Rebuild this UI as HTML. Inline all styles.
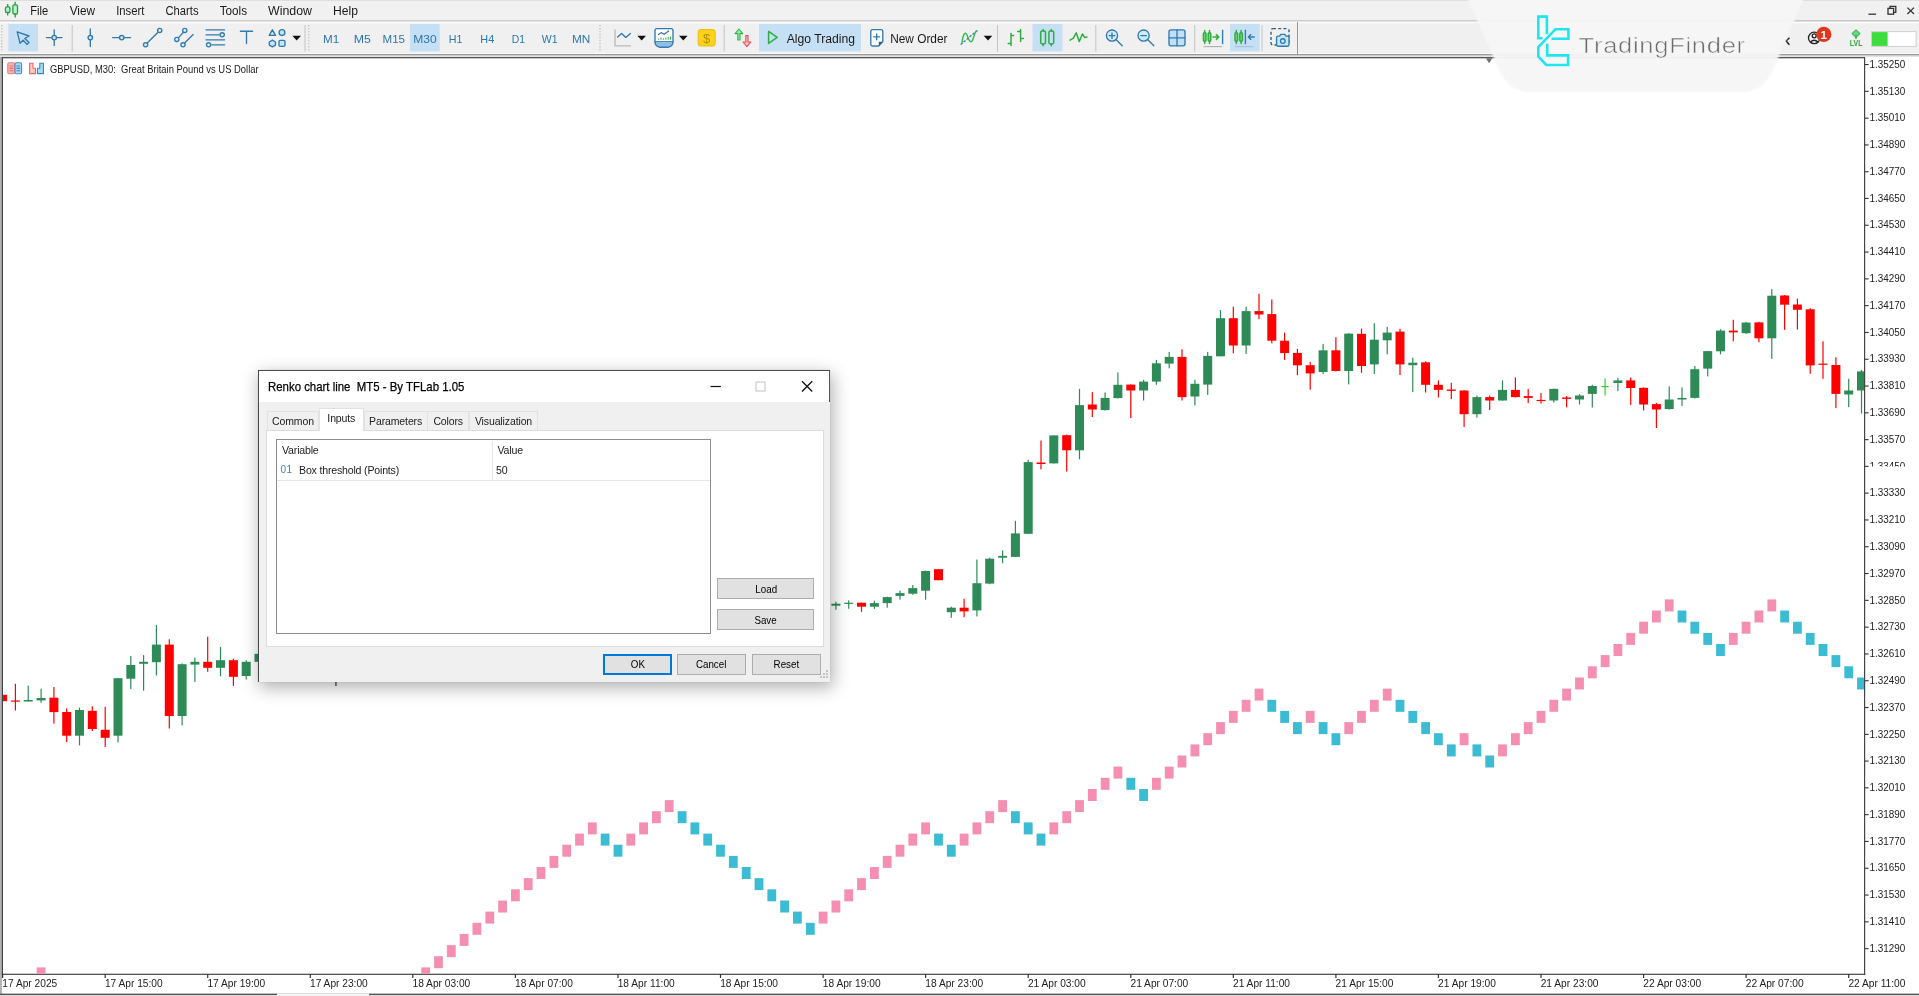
<!DOCTYPE html><html><head><meta charset="utf-8"><title>GBPUSD, M30 - Renko chart line MT5</title>
<style>
html,body{margin:0;padding:0;background:#fff;}
body{width:1919px;height:996px;overflow:hidden;position:relative;font-family:"Liberation Sans",sans-serif;}
svg{position:absolute;left:0;top:0;will-change:transform;}
svg text{font-family:"Liberation Sans",sans-serif;}
#dlg{will-change:transform;position:absolute;left:258px;top:370px;width:572px;height:312px;box-sizing:border-box;background:#f0f0f0;border:0 solid #4a4a4a;border-width:1.2px 0 0 1.2px;box-shadow:2px 5px 16px 1px rgba(0,0,0,.30),0 0 2px rgba(0,0,0,.10);}
#dlg .title{position:absolute;left:0;top:0;right:0;height:31px;background:#fff;border-right:1.2px solid #555;}
#dlg .title span{position:absolute;left:9px;top:9px;font-size:12.6px;color:#000;-webkit-text-stroke:.25px #000;white-space:pre;transform-origin:0 50%;transform:scaleX(.906);display:inline-block}
#dlg .tab{position:absolute;top:40px;height:19px;box-sizing:border-box;background:#f0f0f0;border:1px solid #e2e2e2;border-bottom:none;font-size:10.5px;color:#222;text-align:center;line-height:18.400px;white-space:nowrap;letter-spacing:-.12px}
#dlg .tab.sel{top:37.400px;height:22.600px;background:#fff;border-color:#e2e2e2;line-height:19.400px;z-index:2}
#dlg .page{position:absolute;left:7px;top:59px;width:558px;height:217px;background:#fff;border:1px solid #dcdcdc;box-sizing:border-box}
#dlg .list{position:absolute;left:17px;top:68px;width:435px;height:195px;background:#fff;border:1px solid #8c8c8c;box-sizing:border-box}
#dlg .btn{position:absolute;box-sizing:border-box;background:#e1e1e1;border:1px solid #adadad;font-size:11px;color:#000;text-align:center;}
#dlg .btn span{display:inline-block;transform:scaleX(.89)}
#dlg .lbl{position:absolute;font-size:10.6px;color:#222;white-space:pre;letter-spacing:-.19px}

</style></head><body>
<svg width="1919" height="996" viewBox="0 0 1919 996">
<rect x="0" y="0" width="1919" height="57" fill="#f0f0f0"/>
<rect x="0" y="0" width="1919" height="20" fill="#f1f1f1"/>
<rect x="0" y="20" width="1919" height="1.4" fill="#cdcdcd"/>
<rect x="0" y="0" width="1919" height="0.8" fill="#dadada"/>
<rect x="0" y="22" width="1919" height="1.3" fill="#fcfcfc"/>
<rect x="0" y="53" width="1919" height="1" fill="#fafafa"/>
<rect x="0" y="54" width="1919" height="1.6" fill="#9b9b9b"/>
<rect x="0" y="55.6" width="1919" height="1.5" fill="#e3e3e3"/>
<rect x="0" y="57" width="2" height="939" fill="#b4b4b4"/>
<rect x="1864" y="57" width="55" height="939" fill="#fff"/>
<rect x="1.8" y="57.1" width="1863.2" height="1.2" fill="#444"/>
<rect x="1.8" y="57.1" width="1.2" height="918" fill="#444"/>
<rect x="1864" y="57.1" width="1.2" height="918" fill="#444"/>
<rect x="1.8" y="973.7" width="1863.4" height="1.2" fill="#444"/>
<rect x="0" y="993.6" width="1919" height="1.6" fill="#555"/>
<rect x="0" y="995.2" width="1919" height="1" fill="#ddd"/>
<rect x="277" y="993.4" width="92" height="2.6" fill="#f4f4f4"/>
<text x="30.3" y="14.7" font-size="12.6" fill="#1a1a1a" textLength="18" lengthAdjust="spacingAndGlyphs">File</text>
<text x="69.7" y="14.7" font-size="12.6" fill="#1a1a1a" textLength="25.3" lengthAdjust="spacingAndGlyphs">View</text>
<text x="116.2" y="14.7" font-size="12.6" fill="#1a1a1a" textLength="28.3" lengthAdjust="spacingAndGlyphs">Insert</text>
<text x="165.5" y="14.7" font-size="12.6" fill="#1a1a1a" textLength="33" lengthAdjust="spacingAndGlyphs">Charts</text>
<text x="219.7" y="14.7" font-size="12.6" fill="#1a1a1a" textLength="27.3" lengthAdjust="spacingAndGlyphs">Tools</text>
<text x="268" y="14.7" font-size="12.6" fill="#1a1a1a" textLength="44" lengthAdjust="spacingAndGlyphs">Window</text>
<text x="333" y="14.7" font-size="12.6" fill="#1a1a1a" textLength="25" lengthAdjust="spacingAndGlyphs">Help</text>
<g stroke="#22a040" stroke-width="1.3" fill="#b8f2c8"><path d="M7.7 4v11.6M15.2 1.8v15.6" fill="none"/><rect x="5.5" y="6.9" width="4.4" height="5.6" rx="1.2"/><rect x="12.9" y="4.8" width="4.6" height="9.2" rx="1.2"/></g>
<g stroke="#333" stroke-width="1.3" fill="none"><path d="M1868.5 14.2h7.6"/><rect x="1888" y="8.4" width="5.6" height="5.8"/><path d="M1890 8.4v-2h5.8v6h-2"/><path d="M1907.4 7.6l6.6 6.4M1914 7.6l-6.6 6.4"/></g>
<rect x="1.3" y="25" width="1" height="1.4" fill="#b5b5b5"/><rect x="1.3" y="28" width="1" height="1.4" fill="#b5b5b5"/><rect x="1.3" y="31" width="1" height="1.4" fill="#b5b5b5"/><rect x="1.3" y="34" width="1" height="1.4" fill="#b5b5b5"/><rect x="1.3" y="37" width="1" height="1.4" fill="#b5b5b5"/><rect x="1.3" y="40" width="1" height="1.4" fill="#b5b5b5"/><rect x="1.3" y="43" width="1" height="1.4" fill="#b5b5b5"/><rect x="1.3" y="46" width="1" height="1.4" fill="#b5b5b5"/><rect x="1.3" y="49" width="1" height="1.4" fill="#b5b5b5"/>
<rect x="308.3" y="25" width="1" height="1.4" fill="#b5b5b5"/><rect x="308.3" y="28" width="1" height="1.4" fill="#b5b5b5"/><rect x="308.3" y="31" width="1" height="1.4" fill="#b5b5b5"/><rect x="308.3" y="34" width="1" height="1.4" fill="#b5b5b5"/><rect x="308.3" y="37" width="1" height="1.4" fill="#b5b5b5"/><rect x="308.3" y="40" width="1" height="1.4" fill="#b5b5b5"/><rect x="308.3" y="43" width="1" height="1.4" fill="#b5b5b5"/><rect x="308.3" y="46" width="1" height="1.4" fill="#b5b5b5"/><rect x="308.3" y="49" width="1" height="1.4" fill="#b5b5b5"/>
<rect x="599.5" y="25" width="1" height="1.4" fill="#b5b5b5"/><rect x="599.5" y="28" width="1" height="1.4" fill="#b5b5b5"/><rect x="599.5" y="31" width="1" height="1.4" fill="#b5b5b5"/><rect x="599.5" y="34" width="1" height="1.4" fill="#b5b5b5"/><rect x="599.5" y="37" width="1" height="1.4" fill="#b5b5b5"/><rect x="599.5" y="40" width="1" height="1.4" fill="#b5b5b5"/><rect x="599.5" y="43" width="1" height="1.4" fill="#b5b5b5"/><rect x="599.5" y="46" width="1" height="1.4" fill="#b5b5b5"/><rect x="599.5" y="49" width="1" height="1.4" fill="#b5b5b5"/>
<rect x="304.5" y="25" width="1" height="26.5" fill="#c4c4c4"/>
<rect x="8.3" y="24" width="29.7" height="27.3" fill="#c5dff5"/>
<rect x="410" y="24" width="29.7" height="27.3" fill="#c5dff5"/>
<rect x="759" y="24" width="102" height="27.3" fill="#c5dff5"/>
<rect x="1032.5" y="24" width="30" height="27.3" fill="#c5dff5"/>
<rect x="1230" y="24" width="29.7" height="27.3" fill="#c5dff5"/>
<path d="M17.2 31.8L29 36L24.8 38.5L29 42.6L27 44.4L23.2 40.3L20 43.2Z" stroke="#327aab" stroke-width="1.35" fill="none" stroke-linecap="round" stroke-linejoin="round"/>
<g stroke="#327aab" stroke-width="1.35" fill="none" stroke-linecap="round" stroke-linejoin="round"><path d="M46.4 37.6h5M57 37.6h5M54.2 29.8v5M54.2 40.4v5"/><circle cx="54.2" cy="37.6" r="2.3" fill="#bfe6fb"/></g>
<rect x="71.7" y="25" width="1" height="26.5" fill="#c4c4c4"/>
<g stroke="#327aab" stroke-width="1.35" fill="none" stroke-linecap="round" stroke-linejoin="round"><path d="M90.3 29v6M90.3 40.2v6.4"/><circle cx="90.3" cy="37.6" r="2.2" fill="#bfe6fb"/></g>
<g stroke="#327aab" stroke-width="1.35" fill="none" stroke-linecap="round" stroke-linejoin="round"><path d="M112.6 37.6h6.4M124.4 37.6h6.2"/><circle cx="121.7" cy="37.6" r="2.2" fill="#bfe6fb"/></g>
<g stroke="#327aab" stroke-width="1.35" fill="none" stroke-linecap="round" stroke-linejoin="round"><path d="M147.2 43l10.8-10.8"/><circle cx="145.6" cy="44.8" r="2.1" fill="#dff2fd"/><circle cx="159.7" cy="30.5" r="2.1" fill="#dff2fd"/></g>
<g stroke="#327aab" stroke-width="1.35" fill="none" stroke-linecap="round" stroke-linejoin="round"><path d="M178.6 37.6l4.8-5.4M184.6 43l8.6-8.4"/><circle cx="176.8" cy="39.4" r="2.1" fill="#dff2fd"/><circle cx="184.8" cy="30.4" r="2.1" fill="#dff2fd"/><circle cx="183" cy="44.8" r="2.1" fill="#dff2fd"/></g>
<g stroke="#327aab" stroke-width="1.35" fill="none" stroke-linecap="round" stroke-linejoin="round"><path d="M206 29.8h18.6M206 34.8h13.2M206 39.8h18.6M211.8 44.8h12.8"/><circle cx="222.2" cy="34.8" r="2.1" fill="#dff2fd"/><circle cx="208.6" cy="44.8" r="2.1" fill="#dff2fd"/></g>
<g stroke="#327aab" stroke-width="1.35" fill="none" stroke-linecap="round" stroke-linejoin="round"><path d="M240.4 31.2h12.2M246.5 31.2v12.4"/></g>
<g stroke="#327aab" stroke-width="1.35" fill="none" stroke-linecap="round" stroke-linejoin="round"><path d="M272.4 29.8l3.2 5.6h-6.4z" fill="#bfe6fb"/><circle cx="282" cy="32.6" r="2.9" fill="#bfe6fb"/><path d="M272.4 40.2l3.1 1.8v3.1l-3.1 1.7l-3.1-1.7v-3.1z" fill="#bfe6fb"/><rect x="279" y="40.4" width="6" height="6" rx="1.3" fill="#bfe6fb"/></g>
<path d="M292.4 35.8h8.6l-4.3 4.6z" fill="#111"/>
<text x="323" y="43" font-size="11.8" fill="#2b76ae" textLength="16.2" lengthAdjust="spacingAndGlyphs">M1</text>
<text x="353.7" y="43" font-size="11.8" fill="#2b76ae" textLength="17.1" lengthAdjust="spacingAndGlyphs">M5</text>
<text x="382.5" y="43" font-size="11.8" fill="#2b76ae" textLength="22.5" lengthAdjust="spacingAndGlyphs">M15</text>
<text x="413.3" y="43" font-size="11.8" fill="#2b76ae" textLength="23.4" lengthAdjust="spacingAndGlyphs">M30</text>
<text x="448.8" y="43" font-size="11.8" fill="#2b76ae" textLength="13.7" lengthAdjust="spacingAndGlyphs">H1</text>
<text x="480.3" y="43" font-size="11.8" fill="#2b76ae" textLength="13.9" lengthAdjust="spacingAndGlyphs">H4</text>
<text x="511.7" y="43" font-size="11.8" fill="#2b76ae" textLength="13.3" lengthAdjust="spacingAndGlyphs">D1</text>
<text x="541.7" y="43" font-size="11.8" fill="#2b76ae" textLength="15.8" lengthAdjust="spacingAndGlyphs">W1</text>
<text x="572" y="43" font-size="11.8" fill="#2b76ae" textLength="18.3" lengthAdjust="spacingAndGlyphs">MN</text>
<path d="M615 29.4v16.4h16" stroke="#b9b9b9" stroke-width="1.3" fill="none"/>
<path d="M617.6 37l4-3.6l4.2 4l4.6-4" stroke="#327aab" stroke-width="1.35" fill="none" stroke-linecap="round" stroke-linejoin="round"/>
<path d="M637.4000000000001 35.8h8.6l-4.3 4.6z" fill="#111"/>
<g stroke="#327aab" stroke-width="1.35" fill="none" stroke-linecap="round" stroke-linejoin="round"><path d="M655 30.6q0-2 2-2h14q2 0 2 2v11.1h-18z" fill="#fff"/><path d="M655 41.7q0 4.4 4.6 5.5h8.8q4.6-1.1 4.6-5.5" fill="#8fbfe6"/></g>
<path d="M658 34.8l3.2-2.2l3 1.6l4.8-3.4" stroke="#3a6ea5" stroke-width="1.2" fill="none"/><path d="M658.6 39.8v-1.4M661 39.8v-2.2M663.4 39.8v-1.6M665.8 39.8v-2.4M668.2 39.8v-3M670.4 39.8v-3.4" stroke="#4cc45a" stroke-width="1.2"/>
<path d="M679 35.8h8.6l-4.3 4.6z" fill="#111"/>
<rect x="698.2" y="29.6" width="17" height="16.4" rx="2.4" fill="#fdd31a" stroke="#ecbb00" stroke-width="1"/>
<text x="706.7" y="42.6" font-size="13" fill="#b48e00" text-anchor="middle">$</text>
<rect x="723.7" y="25" width="1" height="26.5" fill="#c4c4c4"/>
<path d="M737.8 40v-6.4h-2.8l3.9-4.6l3.9 4.6h-2.8v6.4z" fill="#9be8a3" stroke="#2db84d" stroke-width="1.1" stroke-linejoin="round"/>
<path d="M745.8 35.6v6.4h-2.8l3.9 4.6l3.9-4.6h-2.8v-6.4z" fill="#fcc0c0" stroke="#e65050" stroke-width="1.1" stroke-linejoin="round"/>
<path d="M768.6 31.4l8.6 6l-8.6 6z" fill="none" stroke="#2fae3f" stroke-width="1.5" stroke-linejoin="round"/>
<text x="786.7" y="42.6" font-size="12.3" fill="#1a1a1a" textLength="68.3" lengthAdjust="spacingAndGlyphs">Algo Trading</text>
<g stroke="#327aab" stroke-width="1.35" fill="none" stroke-linecap="round" stroke-linejoin="round"><path d="M870.8 31.4q0-1.8 1.8-1.8h8.4q1.8 0 1.8 1.8v10.2l-4.2 4.4h-6q-1.8 0-1.8-1.8z" fill="#fff"/><path d="M876.7 33.8v6M873.7 36.8h6"/></g><path d="M882.8 41.8l-4 4.2v-4.2z" fill="#2a5f8a"/>
<text x="890.2" y="42.6" font-size="12.3" fill="#1a1a1a" textLength="57.3" lengthAdjust="spacingAndGlyphs">New Order</text>
<path d="M960.6 44.6L977.4 30.4" stroke="#3a7fc0" stroke-width="1.3" fill="none" stroke-dasharray="2.6 1.3"/><path d="M962 42.6C963.2 33 965.6 30.6 967.6 36.4S971.6 44 973.4 38S975 32.6 976.4 31" stroke="#2fb84a" stroke-width="1.4" fill="none" stroke-linecap="round"/>
<path d="M983.7 35.8h8.6l-4.3 4.6z" fill="#111"/>
<rect x="997" y="25" width="1" height="26.5" fill="#c4c4c4"/>
<g stroke="#2fae3f" stroke-width="1.5" fill="none" stroke-linecap="round" stroke-linejoin="round"><path d="M1011 33.4v12M1008.2 43.4h2.8M1011 35.6h2.6M1020.6 29.4v12M1017.8 31.6h2.8M1020.6 38.6h2.8"/></g>
<g stroke="#2fae3f" stroke-width="1.5" fill="none" stroke-linecap="round" stroke-linejoin="round"><rect x="1040.7" y="31" width="4.8" height="13" rx="1.4"/><path d="M1043.1 29.4v1.6M1043.1 44v1.8"/><rect x="1048.9" y="31" width="4.8" height="13" rx="1.4"/><path d="M1051.3 29.4v1.6M1051.3 44v1.8"/></g>
<path d="M1070 40.2l3.2-1.8l3-5.6l3 8.8l3.2-7.6l2.4 3.6l2.2-.6" stroke="#2fae3f" stroke-width="1.5" fill="none" stroke-linecap="round" stroke-linejoin="round"/>
<rect x="1095.3" y="25" width="1" height="26.5" fill="#c4c4c4"/>
<g stroke="#327aab" stroke-width="1.35" fill="none" stroke-linecap="round" stroke-linejoin="round"><circle cx="1112" cy="35.6" r="5.6" fill="#cdeafb"/><path d="M1116.2 39.8l6 6M1109.2 35.6h5.6M1112 32.8v5.6"/></g>
<g stroke="#327aab" stroke-width="1.35" fill="none" stroke-linecap="round" stroke-linejoin="round"><circle cx="1143.6" cy="35.6" r="5.6" fill="#cdeafb"/><path d="M1147.8 39.8l6 6M1140.8 35.6h5.6"/></g>
<g stroke="#327aab" stroke-width="1.35" fill="none" stroke-linecap="round" stroke-linejoin="round"><rect x="1169" y="29.8" width="16" height="16" rx="2" fill="#bfe0f7"/><path d="M1177 29.8v16M1169 37.8h16"/></g>
<rect x="1194.2" y="25" width="1" height="26.5" fill="#c4c4c4"/>
<g stroke="#2fae3f" stroke-width="1.5" fill="none" stroke-linecap="round" stroke-linejoin="round"><rect x="1203.4" y="32.8" width="2.6" height="8.4" rx="1" fill="#7bd67b"/><path d="M1204.7 30.6v2.2M1204.7 41.2v2.2"/><rect x="1208.2" y="32.8" width="2.6" height="8.4" rx="1" fill="#7bd67b"/><path d="M1209.5 30.6v2.2M1209.5 41.2v2.2"/><path d="M1213 37h5.6M1216.4 34.6l2.4 2.4l-2.4 2.4"/></g><path d="M1222.6 29.8v14.4" stroke="#2f7fb8" stroke-width="1.4"/><path d="M1203.6 46.6h18.6" stroke="#b5b5b5" stroke-width="1.2"/>
<g stroke="#2fae3f" stroke-width="1.5" fill="none" stroke-linecap="round" stroke-linejoin="round"><rect x="1235" y="32.8" width="2.6" height="8.4" rx="1" fill="#7bd67b"/><path d="M1236.3 30.6v2.2M1236.3 41.2v2.2"/><rect x="1239.8" y="32.8" width="2.6" height="8.4" rx="1" fill="#7bd67b"/><path d="M1241.1 30.6v2.2M1241.1 41.2v2.2"/></g><path d="M1245.4 29.8v14.4" stroke="#2f7fb8" stroke-width="1.4"/><path d="M1248.6 37h5.6M1250.8 34.6l-2.4 2.4l2.4 2.4" stroke="#327aab" stroke-width="1.35" fill="none" stroke-linecap="round" stroke-linejoin="round"/><path d="M1235 46.6h18.6" stroke="#a9c4da" stroke-width="1.2"/>
<rect x="1261.5" y="25" width="1" height="26.5" fill="#c4c4c4"/>
<rect x="1271" y="28.6" width="18" height="16.4" rx="2" stroke="#2f5f84" stroke-width="1.4" fill="none" stroke-dasharray="3 2.2"/>
<g stroke="#327aab" stroke-width="1.35" fill="none" stroke-linecap="round" stroke-linejoin="round"><path d="M1276.6 37.6q0-1.4 1.4-1.4h1.6l1.2-1.8h4l1.2 1.8h1.6q1.4 0 1.4 1.4v7.2q0 1.4-1.4 1.4h-9.6q-1.4 0-1.4-1.4z" fill="#c6e6fa"/><circle cx="1282.8" cy="41" r="2.3"/></g>
<rect x="1297" y="22" width="1" height="32" fill="#9a9a9a"/>
<rect x="1795" y="20.2" width="124" height="1" fill="#c9c9c9"/>
<path d="M1789.4 37.7L1786.2 41L1789.4 44.7" stroke="#222" stroke-width="1.5" fill="none"/>
<g stroke="#222" stroke-width="1.3" fill="none"><circle cx="1814.2" cy="37.9" r="5.7"/><circle cx="1814.2" cy="35.8" r="2"/><path d="M1810.4 42q3.8-3.6 7.6 0"/></g>
<circle cx="1823.8" cy="34.4" r="7.6" fill="#e2371f"/><text x="1823.8" y="38.6" font-size="11.5" font-weight="bold" fill="#fff" text-anchor="middle">1</text>
<path d="M1856 29.8l4.2 3.8l-4.2 3.8l-4.2-3.8z" fill="#62d68c" stroke="#2fae3f" stroke-width="1"/><path d="M1856 35.6v3.2" stroke="#2fae3f" stroke-width="1.6"/>
<text x="1849.8" y="45.6" font-size="8.2" font-weight="bold" fill="#2fae3f" textLength="12.6" lengthAdjust="spacingAndGlyphs">LVL</text>
<rect x="1871.5" y="31.6" width="44.6" height="14.8" fill="#fff" stroke="#cfcfcf" stroke-width="1"/><rect x="1872" y="32.1" width="15.6" height="13.8" fill="#3fdc3f"/>
<path d="M1485.8 58.2h6.6l-3.3 5z" fill="#6f747a"/>
<g stroke-width="1.1"><rect x="7.8" y="62.8" width="6.6" height="11" rx="1.2" fill="#ffb3b3" stroke="#ee7b7b"/><rect x="15" y="62.8" width="6.6" height="11" rx="1.2" fill="#a9daf7" stroke="#4a8fc0"/><path d="M9.4 66h3.6M9.4 68.4h3.6M9.4 70.8h3.6" stroke="#e86a6a"/><path d="M16.4 66h3.8M16.4 68.4h3.8M16.4 70.8h3.8" stroke="#3f86ba"/></g>
<g stroke-width="1.1"><path d="M29.6 63.2h3.4v5h2.4v5.4h-5.8z" fill="#ffc9c0" stroke="#e36b6b"/><path d="M37.4 73.6v-5.4h2.4v-5h3.6v10.4z" fill="#a9daf7" stroke="#3f86ba"/></g>
<text x="50" y="72.6" font-size="10.2" fill="#1a1a1a" textLength="208.6" lengthAdjust="spacingAndGlyphs" xml:space="preserve">GBPUSD, M30:  Great Britain Pound vs US Dollar</text>
<rect x="1865" y="64" width="3.6" height="1.1" fill="#333"/>
<text x="1869.4" y="67.7" font-size="10.2" fill="#222" textLength="35.8" lengthAdjust="spacingAndGlyphs">1.35250</text>
<rect x="1865" y="90.8" width="3.6" height="1.1" fill="#333"/>
<text x="1869.4" y="94.5" font-size="10.2" fill="#222" textLength="35.8" lengthAdjust="spacingAndGlyphs">1.35130</text>
<rect x="1865" y="117.6" width="3.6" height="1.1" fill="#333"/>
<text x="1869.4" y="121.3" font-size="10.2" fill="#222" textLength="35.8" lengthAdjust="spacingAndGlyphs">1.35010</text>
<rect x="1865" y="144.4" width="3.6" height="1.1" fill="#333"/>
<text x="1869.4" y="148.1" font-size="10.2" fill="#222" textLength="35.8" lengthAdjust="spacingAndGlyphs">1.34890</text>
<rect x="1865" y="171.2" width="3.6" height="1.1" fill="#333"/>
<text x="1869.4" y="174.9" font-size="10.2" fill="#222" textLength="35.8" lengthAdjust="spacingAndGlyphs">1.34770</text>
<rect x="1865" y="197.9" width="3.6" height="1.1" fill="#333"/>
<text x="1869.4" y="201.6" font-size="10.2" fill="#222" textLength="35.8" lengthAdjust="spacingAndGlyphs">1.34650</text>
<rect x="1865" y="224.7" width="3.6" height="1.1" fill="#333"/>
<text x="1869.4" y="228.4" font-size="10.2" fill="#222" textLength="35.8" lengthAdjust="spacingAndGlyphs">1.34530</text>
<rect x="1865" y="251.5" width="3.6" height="1.1" fill="#333"/>
<text x="1869.4" y="255.2" font-size="10.2" fill="#222" textLength="35.8" lengthAdjust="spacingAndGlyphs">1.34410</text>
<rect x="1865" y="278.3" width="3.6" height="1.1" fill="#333"/>
<text x="1869.4" y="282" font-size="10.2" fill="#222" textLength="35.8" lengthAdjust="spacingAndGlyphs">1.34290</text>
<rect x="1865" y="305.1" width="3.6" height="1.1" fill="#333"/>
<text x="1869.4" y="308.8" font-size="10.2" fill="#222" textLength="35.8" lengthAdjust="spacingAndGlyphs">1.34170</text>
<rect x="1865" y="331.9" width="3.6" height="1.1" fill="#333"/>
<text x="1869.4" y="335.6" font-size="10.2" fill="#222" textLength="35.8" lengthAdjust="spacingAndGlyphs">1.34050</text>
<rect x="1865" y="358.7" width="3.6" height="1.1" fill="#333"/>
<text x="1869.4" y="362.4" font-size="10.2" fill="#222" textLength="35.8" lengthAdjust="spacingAndGlyphs">1.33930</text>
<rect x="1865" y="385.5" width="3.6" height="1.1" fill="#333"/>
<text x="1869.4" y="389.2" font-size="10.2" fill="#222" textLength="35.8" lengthAdjust="spacingAndGlyphs">1.33810</text>
<rect x="1865" y="412.3" width="3.6" height="1.1" fill="#333"/>
<text x="1869.4" y="416" font-size="10.2" fill="#222" textLength="35.8" lengthAdjust="spacingAndGlyphs">1.33690</text>
<rect x="1865" y="439.1" width="3.6" height="1.1" fill="#333"/>
<text x="1869.4" y="442.8" font-size="10.2" fill="#222" textLength="35.8" lengthAdjust="spacingAndGlyphs">1.33570</text>
<rect x="1865" y="465.8" width="3.6" height="1.1" fill="#333"/>
<text x="1869.4" y="469.5" font-size="10.2" fill="#222" textLength="35.8" lengthAdjust="spacingAndGlyphs">1.33450</text>
<rect x="1865" y="492.6" width="3.6" height="1.1" fill="#333"/>
<text x="1869.4" y="496.3" font-size="10.2" fill="#222" textLength="35.8" lengthAdjust="spacingAndGlyphs">1.33330</text>
<rect x="1865" y="519.4" width="3.6" height="1.1" fill="#333"/>
<text x="1869.4" y="523.1" font-size="10.2" fill="#222" textLength="35.8" lengthAdjust="spacingAndGlyphs">1.33210</text>
<rect x="1865" y="546.2" width="3.6" height="1.1" fill="#333"/>
<text x="1869.4" y="549.9" font-size="10.2" fill="#222" textLength="35.8" lengthAdjust="spacingAndGlyphs">1.33090</text>
<rect x="1865" y="573" width="3.6" height="1.1" fill="#333"/>
<text x="1869.4" y="576.7" font-size="10.2" fill="#222" textLength="35.8" lengthAdjust="spacingAndGlyphs">1.32970</text>
<rect x="1865" y="599.8" width="3.6" height="1.1" fill="#333"/>
<text x="1869.4" y="603.5" font-size="10.2" fill="#222" textLength="35.8" lengthAdjust="spacingAndGlyphs">1.32850</text>
<rect x="1865" y="626.6" width="3.6" height="1.1" fill="#333"/>
<text x="1869.4" y="630.3" font-size="10.2" fill="#222" textLength="35.8" lengthAdjust="spacingAndGlyphs">1.32730</text>
<rect x="1865" y="653.4" width="3.6" height="1.1" fill="#333"/>
<text x="1869.4" y="657.1" font-size="10.2" fill="#222" textLength="35.8" lengthAdjust="spacingAndGlyphs">1.32610</text>
<rect x="1865" y="680.2" width="3.6" height="1.1" fill="#333"/>
<text x="1869.4" y="683.9" font-size="10.2" fill="#222" textLength="35.8" lengthAdjust="spacingAndGlyphs">1.32490</text>
<rect x="1865" y="707" width="3.6" height="1.1" fill="#333"/>
<text x="1869.4" y="710.7" font-size="10.2" fill="#222" textLength="35.8" lengthAdjust="spacingAndGlyphs">1.32370</text>
<rect x="1865" y="733.8" width="3.6" height="1.1" fill="#333"/>
<text x="1869.4" y="737.5" font-size="10.2" fill="#222" textLength="35.8" lengthAdjust="spacingAndGlyphs">1.32250</text>
<rect x="1865" y="760.5" width="3.6" height="1.1" fill="#333"/>
<text x="1869.4" y="764.2" font-size="10.2" fill="#222" textLength="35.8" lengthAdjust="spacingAndGlyphs">1.32130</text>
<rect x="1865" y="787.3" width="3.6" height="1.1" fill="#333"/>
<text x="1869.4" y="791" font-size="10.2" fill="#222" textLength="35.8" lengthAdjust="spacingAndGlyphs">1.32010</text>
<rect x="1865" y="814.1" width="3.6" height="1.1" fill="#333"/>
<text x="1869.4" y="817.8" font-size="10.2" fill="#222" textLength="35.8" lengthAdjust="spacingAndGlyphs">1.31890</text>
<rect x="1865" y="840.9" width="3.6" height="1.1" fill="#333"/>
<text x="1869.4" y="844.6" font-size="10.2" fill="#222" textLength="35.8" lengthAdjust="spacingAndGlyphs">1.31770</text>
<rect x="1865" y="867.7" width="3.6" height="1.1" fill="#333"/>
<text x="1869.4" y="871.4" font-size="10.2" fill="#222" textLength="35.8" lengthAdjust="spacingAndGlyphs">1.31650</text>
<rect x="1865" y="894.5" width="3.6" height="1.1" fill="#333"/>
<text x="1869.4" y="898.2" font-size="10.2" fill="#222" textLength="35.8" lengthAdjust="spacingAndGlyphs">1.31530</text>
<rect x="1865" y="921.3" width="3.6" height="1.1" fill="#333"/>
<text x="1869.4" y="925" font-size="10.2" fill="#222" textLength="35.8" lengthAdjust="spacingAndGlyphs">1.31410</text>
<rect x="1865" y="948.1" width="3.6" height="1.1" fill="#333"/>
<text x="1869.4" y="951.8" font-size="10.2" fill="#222" textLength="35.8" lengthAdjust="spacingAndGlyphs">1.31290</text>
<rect x="1868.8" y="466.5" width="50" height="12" fill="#fff"/>
<rect x="2" y="974" width="1.2" height="4" fill="#333"/>
<text x="2.3" y="987.2" font-size="10.2" fill="#222">17 Apr 2025</text>
<rect x="104.6" y="974" width="1.2" height="4" fill="#333"/>
<text x="104.9" y="987.2" font-size="10.2" fill="#222">17 Apr 15:00</text>
<rect x="207.1" y="974" width="1.2" height="4" fill="#333"/>
<text x="207.4" y="987.2" font-size="10.2" fill="#222">17 Apr 19:00</text>
<rect x="309.7" y="974" width="1.2" height="4" fill="#333"/>
<text x="310" y="987.2" font-size="10.2" fill="#222">17 Apr 23:00</text>
<rect x="412.2" y="974" width="1.2" height="4" fill="#333"/>
<text x="412.5" y="987.2" font-size="10.2" fill="#222">18 Apr 03:00</text>
<rect x="514.8" y="974" width="1.2" height="4" fill="#333"/>
<text x="515.1" y="987.2" font-size="10.2" fill="#222">18 Apr 07:00</text>
<rect x="617.4" y="974" width="1.2" height="4" fill="#333"/>
<text x="617.7" y="987.2" font-size="10.2" fill="#222">18 Apr 11:00</text>
<rect x="719.9" y="974" width="1.2" height="4" fill="#333"/>
<text x="720.2" y="987.2" font-size="10.2" fill="#222">18 Apr 15:00</text>
<rect x="822.5" y="974" width="1.2" height="4" fill="#333"/>
<text x="822.8" y="987.2" font-size="10.2" fill="#222">18 Apr 19:00</text>
<rect x="925" y="974" width="1.2" height="4" fill="#333"/>
<text x="925.3" y="987.2" font-size="10.2" fill="#222">18 Apr 23:00</text>
<rect x="1027.6" y="974" width="1.2" height="4" fill="#333"/>
<text x="1027.9" y="987.2" font-size="10.2" fill="#222">21 Apr 03:00</text>
<rect x="1130.2" y="974" width="1.2" height="4" fill="#333"/>
<text x="1130.5" y="987.2" font-size="10.2" fill="#222">21 Apr 07:00</text>
<rect x="1232.7" y="974" width="1.2" height="4" fill="#333"/>
<text x="1233" y="987.2" font-size="10.2" fill="#222">21 Apr 11:00</text>
<rect x="1335.3" y="974" width="1.2" height="4" fill="#333"/>
<text x="1335.6" y="987.2" font-size="10.2" fill="#222">21 Apr 15:00</text>
<rect x="1437.8" y="974" width="1.2" height="4" fill="#333"/>
<text x="1438.1" y="987.2" font-size="10.2" fill="#222">21 Apr 19:00</text>
<rect x="1540.4" y="974" width="1.2" height="4" fill="#333"/>
<text x="1540.7" y="987.2" font-size="10.2" fill="#222">21 Apr 23:00</text>
<rect x="1643" y="974" width="1.2" height="4" fill="#333"/>
<text x="1643.3" y="987.2" font-size="10.2" fill="#222">22 Apr 03:00</text>
<rect x="1745.5" y="974" width="1.2" height="4" fill="#333"/>
<text x="1745.8" y="987.2" font-size="10.2" fill="#222">22 Apr 07:00</text>
<rect x="1848.1" y="974" width="1.2" height="4" fill="#333"/>
<text x="1848.4" y="987.2" font-size="10.2" fill="#222">22 Apr 11:00</text>
<clipPath id="cc"><rect x="3" y="58.3" width="1861" height="915.4"/></clipPath>
<g clip-path="url(#cc)">
<rect x="36.7" y="967.4" width="8.8" height="12" fill="#f48fb1"/>
<rect x="421.3" y="967.4" width="8.8" height="12" fill="#f48fb1"/>
<rect x="434.1" y="956.2" width="8.8" height="12" fill="#f48fb1"/>
<rect x="446.9" y="945.1" width="8.8" height="12" fill="#f48fb1"/>
<rect x="459.7" y="933.9" width="8.8" height="12" fill="#f48fb1"/>
<rect x="472.5" y="922.8" width="8.8" height="12" fill="#f48fb1"/>
<rect x="485.4" y="911.6" width="8.8" height="12" fill="#f48fb1"/>
<rect x="498.2" y="900.5" width="8.8" height="12" fill="#f48fb1"/>
<rect x="511" y="889.3" width="8.8" height="12" fill="#f48fb1"/>
<rect x="523.8" y="878.1" width="8.8" height="12" fill="#f48fb1"/>
<rect x="536.6" y="867" width="8.8" height="12" fill="#f48fb1"/>
<rect x="549.5" y="855.9" width="8.8" height="12" fill="#f48fb1"/>
<rect x="562.3" y="844.7" width="8.8" height="12" fill="#f48fb1"/>
<rect x="575.1" y="833.6" width="8.8" height="12" fill="#f48fb1"/>
<rect x="587.9" y="822.4" width="8.8" height="12" fill="#f48fb1"/>
<rect x="600.7" y="833.6" width="8.8" height="12" fill="#3bbcd2"/>
<rect x="613.6" y="844.7" width="8.8" height="12" fill="#3bbcd2"/>
<rect x="626.4" y="833.6" width="8.8" height="12" fill="#f48fb1"/>
<rect x="639.2" y="822.4" width="8.8" height="12" fill="#f48fb1"/>
<rect x="652" y="811.2" width="8.8" height="12" fill="#f48fb1"/>
<rect x="664.8" y="800.1" width="8.8" height="12" fill="#f48fb1"/>
<rect x="677.7" y="811.2" width="8.8" height="12" fill="#3bbcd2"/>
<rect x="690.5" y="822.4" width="8.8" height="12" fill="#3bbcd2"/>
<rect x="703.3" y="833.6" width="8.8" height="12" fill="#3bbcd2"/>
<rect x="716.1" y="844.7" width="8.8" height="12" fill="#3bbcd2"/>
<rect x="728.9" y="855.9" width="8.8" height="12" fill="#3bbcd2"/>
<rect x="741.8" y="867" width="8.8" height="12" fill="#3bbcd2"/>
<rect x="754.6" y="878.1" width="8.8" height="12" fill="#3bbcd2"/>
<rect x="767.4" y="889.3" width="8.8" height="12" fill="#3bbcd2"/>
<rect x="780.2" y="900.5" width="8.8" height="12" fill="#3bbcd2"/>
<rect x="793" y="911.6" width="8.8" height="12" fill="#3bbcd2"/>
<rect x="805.9" y="922.8" width="8.8" height="12" fill="#3bbcd2"/>
<rect x="818.7" y="911.6" width="8.8" height="12" fill="#f48fb1"/>
<rect x="831.5" y="900.5" width="8.8" height="12" fill="#f48fb1"/>
<rect x="844.3" y="889.3" width="8.8" height="12" fill="#f48fb1"/>
<rect x="857.1" y="878.1" width="8.8" height="12" fill="#f48fb1"/>
<rect x="870" y="867" width="8.8" height="12" fill="#f48fb1"/>
<rect x="882.8" y="855.9" width="8.8" height="12" fill="#f48fb1"/>
<rect x="895.6" y="844.7" width="8.8" height="12" fill="#f48fb1"/>
<rect x="908.4" y="833.6" width="8.8" height="12" fill="#f48fb1"/>
<rect x="921.2" y="822.4" width="8.8" height="12" fill="#f48fb1"/>
<rect x="934.1" y="833.6" width="8.8" height="12" fill="#3bbcd2"/>
<rect x="946.9" y="844.7" width="8.8" height="12" fill="#3bbcd2"/>
<rect x="959.7" y="833.6" width="8.8" height="12" fill="#f48fb1"/>
<rect x="972.5" y="822.4" width="8.8" height="12" fill="#f48fb1"/>
<rect x="985.3" y="811.2" width="8.8" height="12" fill="#f48fb1"/>
<rect x="998.2" y="800.1" width="8.8" height="12" fill="#f48fb1"/>
<rect x="1011" y="811.2" width="8.8" height="12" fill="#3bbcd2"/>
<rect x="1023.8" y="822.4" width="8.8" height="12" fill="#3bbcd2"/>
<rect x="1036.6" y="833.6" width="8.8" height="12" fill="#3bbcd2"/>
<rect x="1049.4" y="822.4" width="8.8" height="12" fill="#f48fb1"/>
<rect x="1062.3" y="811.2" width="8.8" height="12" fill="#f48fb1"/>
<rect x="1075.1" y="800.1" width="8.8" height="12" fill="#f48fb1"/>
<rect x="1087.9" y="789" width="8.8" height="12" fill="#f48fb1"/>
<rect x="1100.7" y="777.8" width="8.8" height="12" fill="#f48fb1"/>
<rect x="1113.5" y="766.6" width="8.8" height="12" fill="#f48fb1"/>
<rect x="1126.4" y="777.8" width="8.8" height="12" fill="#3bbcd2"/>
<rect x="1139.2" y="789" width="8.8" height="12" fill="#3bbcd2"/>
<rect x="1152" y="777.8" width="8.8" height="12" fill="#f48fb1"/>
<rect x="1164.8" y="766.6" width="8.8" height="12" fill="#f48fb1"/>
<rect x="1177.6" y="755.5" width="8.8" height="12" fill="#f48fb1"/>
<rect x="1190.5" y="744.4" width="8.8" height="12" fill="#f48fb1"/>
<rect x="1203.3" y="733.2" width="8.8" height="12" fill="#f48fb1"/>
<rect x="1216.1" y="722.1" width="8.8" height="12" fill="#f48fb1"/>
<rect x="1228.9" y="710.9" width="8.8" height="12" fill="#f48fb1"/>
<rect x="1241.7" y="699.8" width="8.8" height="12" fill="#f48fb1"/>
<rect x="1254.6" y="688.6" width="8.8" height="12" fill="#f48fb1"/>
<rect x="1267.4" y="699.8" width="8.8" height="12" fill="#3bbcd2"/>
<rect x="1280.2" y="710.9" width="8.8" height="12" fill="#3bbcd2"/>
<rect x="1293" y="722.1" width="8.8" height="12" fill="#3bbcd2"/>
<rect x="1305.8" y="710.9" width="8.8" height="12" fill="#f48fb1"/>
<rect x="1318.7" y="722.1" width="8.8" height="12" fill="#3bbcd2"/>
<rect x="1331.5" y="733.2" width="8.8" height="12" fill="#3bbcd2"/>
<rect x="1344.3" y="722.1" width="8.8" height="12" fill="#f48fb1"/>
<rect x="1357.1" y="710.9" width="8.8" height="12" fill="#f48fb1"/>
<rect x="1369.9" y="699.8" width="8.8" height="12" fill="#f48fb1"/>
<rect x="1382.8" y="688.6" width="8.8" height="12" fill="#f48fb1"/>
<rect x="1395.6" y="699.8" width="8.8" height="12" fill="#3bbcd2"/>
<rect x="1408.4" y="710.9" width="8.8" height="12" fill="#3bbcd2"/>
<rect x="1421.2" y="722.1" width="8.8" height="12" fill="#3bbcd2"/>
<rect x="1434" y="733.2" width="8.8" height="12" fill="#3bbcd2"/>
<rect x="1446.9" y="744.4" width="8.8" height="12" fill="#3bbcd2"/>
<rect x="1459.7" y="733.2" width="8.8" height="12" fill="#f48fb1"/>
<rect x="1472.5" y="744.4" width="8.8" height="12" fill="#3bbcd2"/>
<rect x="1485.3" y="755.5" width="8.8" height="12" fill="#3bbcd2"/>
<rect x="1498.1" y="744.4" width="8.8" height="12" fill="#f48fb1"/>
<rect x="1511" y="733.2" width="8.8" height="12" fill="#f48fb1"/>
<rect x="1523.8" y="722.1" width="8.8" height="12" fill="#f48fb1"/>
<rect x="1536.6" y="710.9" width="8.8" height="12" fill="#f48fb1"/>
<rect x="1549.4" y="699.8" width="8.8" height="12" fill="#f48fb1"/>
<rect x="1562.2" y="688.6" width="8.8" height="12" fill="#f48fb1"/>
<rect x="1575.1" y="677.5" width="8.8" height="12" fill="#f48fb1"/>
<rect x="1587.9" y="666.3" width="8.8" height="12" fill="#f48fb1"/>
<rect x="1600.7" y="655.1" width="8.8" height="12" fill="#f48fb1"/>
<rect x="1613.5" y="644" width="8.8" height="12" fill="#f48fb1"/>
<rect x="1626.3" y="632.9" width="8.8" height="12" fill="#f48fb1"/>
<rect x="1639.2" y="621.7" width="8.8" height="12" fill="#f48fb1"/>
<rect x="1652" y="610.5" width="8.8" height="12" fill="#f48fb1"/>
<rect x="1664.8" y="599.4" width="8.8" height="12" fill="#f48fb1"/>
<rect x="1677.6" y="610.5" width="8.8" height="12" fill="#3bbcd2"/>
<rect x="1690.4" y="621.7" width="8.8" height="12" fill="#3bbcd2"/>
<rect x="1703.3" y="632.9" width="8.8" height="12" fill="#3bbcd2"/>
<rect x="1716.1" y="644" width="8.8" height="12" fill="#3bbcd2"/>
<rect x="1728.9" y="632.9" width="8.8" height="12" fill="#f48fb1"/>
<rect x="1741.7" y="621.7" width="8.8" height="12" fill="#f48fb1"/>
<rect x="1754.5" y="610.5" width="8.8" height="12" fill="#f48fb1"/>
<rect x="1767.4" y="599.4" width="8.8" height="12" fill="#f48fb1"/>
<rect x="1780.2" y="610.5" width="8.8" height="12" fill="#3bbcd2"/>
<rect x="1793" y="621.7" width="8.8" height="12" fill="#3bbcd2"/>
<rect x="1805.8" y="632.9" width="8.8" height="12" fill="#3bbcd2"/>
<rect x="1818.6" y="644" width="8.8" height="12" fill="#3bbcd2"/>
<rect x="1831.5" y="655.1" width="8.8" height="12" fill="#3bbcd2"/>
<rect x="1844.3" y="666.3" width="8.8" height="12" fill="#3bbcd2"/>
<rect x="1857.1" y="677.5" width="8.8" height="12" fill="#3bbcd2"/>
<rect x="2" y="694.8" width="1.2" height="6.4" fill="#ff0000"/>
<rect x="-1.9" y="694.8" width="9" height="6.4" fill="#ff0000"/>
<rect x="14.8" y="683.8" width="1.2" height="26.7" fill="#ff0000"/>
<rect x="10.9" y="700.5" width="9" height="1.2" fill="#ff0000"/>
<rect x="27.6" y="685.6" width="1.2" height="15.9" fill="#2e8b57"/>
<rect x="23.7" y="700" width="9" height="1.5" fill="#2e8b57"/>
<rect x="40.5" y="688.7" width="1.2" height="14.1" fill="#2e8b57"/>
<rect x="36.6" y="698" width="9" height="2.4" fill="#2e8b57"/>
<rect x="53.3" y="687" width="1.2" height="36.7" fill="#ff0000"/>
<rect x="49.4" y="697.7" width="9" height="14.4" fill="#ff0000"/>
<rect x="66.1" y="708.4" width="1.2" height="33.7" fill="#ff0000"/>
<rect x="62.2" y="712" width="9" height="23.7" fill="#ff0000"/>
<rect x="78.9" y="707.6" width="1.2" height="37.8" fill="#2e8b57"/>
<rect x="75" y="710" width="9" height="25.7" fill="#2e8b57"/>
<rect x="91.7" y="706.3" width="1.2" height="24.7" fill="#ff0000"/>
<rect x="87.8" y="710.8" width="9" height="18.2" fill="#ff0000"/>
<rect x="104.6" y="706.8" width="1.2" height="40.2" fill="#ff0000"/>
<rect x="100.7" y="729.8" width="9" height="8" fill="#ff0000"/>
<rect x="117.4" y="677.9" width="1.2" height="64.6" fill="#2e8b57"/>
<rect x="113.5" y="678.2" width="9" height="57.5" fill="#2e8b57"/>
<rect x="130.2" y="655.9" width="1.2" height="33.2" fill="#2e8b57"/>
<rect x="126.3" y="665" width="9" height="13.7" fill="#2e8b57"/>
<rect x="143" y="655.1" width="1.2" height="35.6" fill="#2e8b57"/>
<rect x="139.1" y="661.8" width="9" height="2" fill="#2e8b57"/>
<rect x="155.8" y="624.9" width="1.2" height="50.6" fill="#2e8b57"/>
<rect x="151.9" y="644.6" width="9" height="17.6" fill="#2e8b57"/>
<rect x="168.7" y="639.3" width="1.2" height="89.2" fill="#ff0000"/>
<rect x="164.8" y="644.6" width="9" height="71.4" fill="#ff0000"/>
<rect x="181.5" y="663.4" width="1.2" height="61.9" fill="#2e8b57"/>
<rect x="177.6" y="664.2" width="9" height="51.8" fill="#2e8b57"/>
<rect x="194.3" y="657.5" width="1.2" height="24.4" fill="#2e8b57"/>
<rect x="190.4" y="661.8" width="9" height="2.8" fill="#2e8b57"/>
<rect x="207.1" y="636.6" width="1.2" height="35.2" fill="#ff0000"/>
<rect x="203.2" y="661.8" width="9" height="6" fill="#ff0000"/>
<rect x="219.9" y="646.9" width="1.2" height="29.4" fill="#2e8b57"/>
<rect x="216" y="660.2" width="9" height="7.6" fill="#2e8b57"/>
<rect x="232.8" y="658.6" width="1.2" height="27.3" fill="#ff0000"/>
<rect x="228.9" y="660.2" width="9" height="16.6" fill="#ff0000"/>
<rect x="245.6" y="660.2" width="1.2" height="19.3" fill="#2e8b57"/>
<rect x="241.7" y="661.8" width="9" height="14.2" fill="#2e8b57"/>
<rect x="258.4" y="653.8" width="1.2" height="8" fill="#2e8b57"/>
<rect x="254.5" y="653.8" width="9" height="8" fill="#2e8b57"/>
<rect x="835.3" y="601.7" width="1.2" height="8.1" fill="#2e8b57"/>
<rect x="831.4" y="603.7" width="9" height="2" fill="#2e8b57"/>
<rect x="848.1" y="600.3" width="1.2" height="8.5" fill="#2e8b57"/>
<rect x="844.2" y="602.7" width="9" height="1.2" fill="#2e8b57"/>
<rect x="860.9" y="602.7" width="1.2" height="9.1" fill="#ff0000"/>
<rect x="857" y="602.7" width="9" height="4" fill="#ff0000"/>
<rect x="873.8" y="600.7" width="1.2" height="8.1" fill="#2e8b57"/>
<rect x="869.9" y="603.1" width="9" height="3.6" fill="#2e8b57"/>
<rect x="886.6" y="596.7" width="1.2" height="11" fill="#2e8b57"/>
<rect x="882.7" y="597.1" width="9" height="6" fill="#2e8b57"/>
<rect x="899.4" y="590.7" width="1.2" height="9" fill="#2e8b57"/>
<rect x="895.5" y="593.1" width="9" height="2.8" fill="#2e8b57"/>
<rect x="912.2" y="585" width="1.2" height="9.7" fill="#2e8b57"/>
<rect x="908.3" y="588.1" width="9" height="5.6" fill="#2e8b57"/>
<rect x="925" y="570.6" width="1.2" height="29.1" fill="#2e8b57"/>
<rect x="921.1" y="571" width="9" height="19.7" fill="#2e8b57"/>
<rect x="937.9" y="569.2" width="1.2" height="11" fill="#ff0000"/>
<rect x="934" y="569.2" width="9" height="11" fill="#ff0000"/>
<rect x="950.7" y="606.7" width="1.2" height="11.1" fill="#2e8b57"/>
<rect x="946.8" y="607.7" width="9" height="4.5" fill="#2e8b57"/>
<rect x="963.5" y="598.7" width="1.2" height="18.5" fill="#ff0000"/>
<rect x="959.6" y="607.7" width="9" height="3.7" fill="#ff0000"/>
<rect x="976.3" y="559.5" width="1.2" height="56.9" fill="#2e8b57"/>
<rect x="972.4" y="583.2" width="9" height="27.2" fill="#2e8b57"/>
<rect x="989.1" y="557.7" width="1.2" height="26.5" fill="#2e8b57"/>
<rect x="985.2" y="558.7" width="9" height="24.9" fill="#2e8b57"/>
<rect x="1002" y="550.5" width="1.2" height="12.7" fill="#2e8b57"/>
<rect x="998.1" y="555.9" width="9" height="1.8" fill="#2e8b57"/>
<rect x="1014.8" y="520.8" width="1.2" height="36.1" fill="#2e8b57"/>
<rect x="1010.9" y="533.4" width="9" height="23.5" fill="#2e8b57"/>
<rect x="1027.6" y="459.7" width="1.2" height="74.1" fill="#2e8b57"/>
<rect x="1023.7" y="462.1" width="9" height="71.7" fill="#2e8b57"/>
<rect x="1040.4" y="440.5" width="1.2" height="28.9" fill="#ff0000"/>
<rect x="1036.5" y="462.5" width="9" height="1.5" fill="#ff0000"/>
<rect x="1053.2" y="435.4" width="1.2" height="28" fill="#2e8b57"/>
<rect x="1049.3" y="435.4" width="9" height="28" fill="#2e8b57"/>
<rect x="1066.1" y="434.6" width="1.2" height="36.9" fill="#ff0000"/>
<rect x="1062.2" y="435.2" width="9" height="15.1" fill="#ff0000"/>
<rect x="1078.9" y="388.9" width="1.2" height="70.4" fill="#2e8b57"/>
<rect x="1075" y="405.1" width="9" height="45.2" fill="#2e8b57"/>
<rect x="1091.7" y="392.1" width="1.2" height="24.9" fill="#ff0000"/>
<rect x="1087.8" y="404.5" width="9" height="5" fill="#ff0000"/>
<rect x="1104.5" y="392.5" width="1.2" height="18" fill="#2e8b57"/>
<rect x="1100.6" y="397.9" width="9" height="12.2" fill="#2e8b57"/>
<rect x="1117.3" y="372.4" width="1.2" height="26.1" fill="#2e8b57"/>
<rect x="1113.4" y="384.8" width="9" height="13.3" fill="#2e8b57"/>
<rect x="1130.2" y="384.4" width="1.2" height="33.6" fill="#ff0000"/>
<rect x="1126.3" y="384.6" width="9" height="5.9" fill="#ff0000"/>
<rect x="1143" y="379.8" width="1.2" height="20.7" fill="#2e8b57"/>
<rect x="1139.1" y="381.6" width="9" height="8.9" fill="#2e8b57"/>
<rect x="1155.8" y="359.9" width="1.2" height="24.9" fill="#2e8b57"/>
<rect x="1151.9" y="363.3" width="9" height="18.3" fill="#2e8b57"/>
<rect x="1168.6" y="351.9" width="1.2" height="16.5" fill="#2e8b57"/>
<rect x="1164.7" y="356.9" width="9" height="6.7" fill="#2e8b57"/>
<rect x="1181.4" y="349.3" width="1.2" height="51.2" fill="#ff0000"/>
<rect x="1177.5" y="356.9" width="9" height="40.2" fill="#ff0000"/>
<rect x="1194.3" y="379.8" width="1.2" height="25.7" fill="#2e8b57"/>
<rect x="1190.4" y="383.8" width="9" height="12.7" fill="#2e8b57"/>
<rect x="1207.1" y="351.9" width="1.2" height="43" fill="#2e8b57"/>
<rect x="1203.2" y="355.9" width="9" height="28.7" fill="#2e8b57"/>
<rect x="1219.9" y="310.1" width="1.2" height="46.2" fill="#2e8b57"/>
<rect x="1216" y="318.2" width="9" height="38.1" fill="#2e8b57"/>
<rect x="1232.7" y="306.7" width="1.2" height="46.6" fill="#ff0000"/>
<rect x="1228.8" y="318.2" width="9" height="27.3" fill="#ff0000"/>
<rect x="1245.5" y="306.7" width="1.2" height="47.2" fill="#2e8b57"/>
<rect x="1241.6" y="311.1" width="9" height="34.4" fill="#2e8b57"/>
<rect x="1258.4" y="293.7" width="1.2" height="25.5" fill="#ff0000"/>
<rect x="1254.5" y="311.1" width="9" height="3.4" fill="#ff0000"/>
<rect x="1271.2" y="299.5" width="1.2" height="43.8" fill="#ff0000"/>
<rect x="1267.3" y="314.1" width="9" height="26.6" fill="#ff0000"/>
<rect x="1284" y="332.6" width="1.2" height="27.3" fill="#ff0000"/>
<rect x="1280.1" y="340.7" width="9" height="12.4" fill="#ff0000"/>
<rect x="1296.8" y="348.9" width="1.2" height="26.3" fill="#ff0000"/>
<rect x="1292.9" y="352.9" width="9" height="12.4" fill="#ff0000"/>
<rect x="1309.6" y="361.9" width="1.2" height="27.8" fill="#ff0000"/>
<rect x="1305.7" y="365.2" width="9" height="8.2" fill="#ff0000"/>
<rect x="1322.5" y="343.9" width="1.2" height="30.1" fill="#2e8b57"/>
<rect x="1318.6" y="350.3" width="9" height="21.7" fill="#2e8b57"/>
<rect x="1335.3" y="337.2" width="1.2" height="34.2" fill="#ff0000"/>
<rect x="1331.4" y="350.3" width="9" height="20.7" fill="#ff0000"/>
<rect x="1348.1" y="333.2" width="1.2" height="51.2" fill="#2e8b57"/>
<rect x="1344.2" y="333.6" width="9" height="37.4" fill="#2e8b57"/>
<rect x="1360.9" y="328.6" width="1.2" height="44.2" fill="#ff0000"/>
<rect x="1357" y="333.8" width="9" height="32.2" fill="#ff0000"/>
<rect x="1373.7" y="323.2" width="1.2" height="50.8" fill="#2e8b57"/>
<rect x="1369.8" y="339.7" width="9" height="24.7" fill="#2e8b57"/>
<rect x="1386.6" y="326.8" width="1.2" height="27.5" fill="#2e8b57"/>
<rect x="1382.7" y="332.6" width="9" height="7.7" fill="#2e8b57"/>
<rect x="1399.4" y="328.8" width="1.2" height="46.2" fill="#ff0000"/>
<rect x="1395.5" y="331.6" width="9" height="32.8" fill="#ff0000"/>
<rect x="1412.2" y="357.7" width="1.2" height="34.4" fill="#2e8b57"/>
<rect x="1408.3" y="362.7" width="9" height="2.5" fill="#2e8b57"/>
<rect x="1425" y="361.3" width="1.2" height="31.2" fill="#ff0000"/>
<rect x="1421.1" y="362.3" width="9" height="22.5" fill="#ff0000"/>
<rect x="1437.8" y="380.4" width="1.2" height="17.1" fill="#ff0000"/>
<rect x="1433.9" y="384.8" width="9" height="5.1" fill="#ff0000"/>
<rect x="1450.7" y="382.8" width="1.2" height="16.3" fill="#ff0000"/>
<rect x="1446.8" y="389.5" width="9" height="1.4" fill="#ff0000"/>
<rect x="1463.5" y="390.1" width="1.2" height="36.9" fill="#ff0000"/>
<rect x="1459.6" y="390.5" width="9" height="23.7" fill="#ff0000"/>
<rect x="1476.3" y="395.5" width="1.2" height="22.1" fill="#2e8b57"/>
<rect x="1472.4" y="397.1" width="9" height="17.1" fill="#2e8b57"/>
<rect x="1489.1" y="395.5" width="1.2" height="14.5" fill="#ff0000"/>
<rect x="1485.2" y="397.1" width="9" height="3.4" fill="#ff0000"/>
<rect x="1501.9" y="380.4" width="1.2" height="20.1" fill="#2e8b57"/>
<rect x="1498" y="389.9" width="9" height="10.6" fill="#2e8b57"/>
<rect x="1514.8" y="377.4" width="1.2" height="20.1" fill="#ff0000"/>
<rect x="1510.9" y="389.9" width="9" height="7.2" fill="#ff0000"/>
<rect x="1527.6" y="388.9" width="1.2" height="14.2" fill="#ff0000"/>
<rect x="1523.7" y="396.1" width="9" height="1.8" fill="#ff0000"/>
<rect x="1540.4" y="393.1" width="1.2" height="10.4" fill="#ff0000"/>
<rect x="1536.5" y="399.9" width="9" height="1.2" fill="#ff0000"/>
<rect x="1553.2" y="388.5" width="1.2" height="14" fill="#2e8b57"/>
<rect x="1549.3" y="388.9" width="9" height="11.6" fill="#2e8b57"/>
<rect x="1566" y="396.1" width="1.2" height="11.2" fill="#ff0000"/>
<rect x="1562.1" y="397.5" width="9" height="1.4" fill="#ff0000"/>
<rect x="1578.9" y="394.1" width="1.2" height="10.4" fill="#2e8b57"/>
<rect x="1575" y="395.5" width="9" height="4" fill="#2e8b57"/>
<rect x="1591.7" y="384.8" width="1.2" height="22.7" fill="#2e8b57"/>
<rect x="1587.8" y="386" width="9" height="7.9" fill="#2e8b57"/>
<rect x="1604.5" y="378.4" width="1.2" height="17.1" fill="#32cd32"/>
<rect x="1601.5" y="386" width="7.2" height="1.2" fill="#32cd32"/>
<rect x="1617.3" y="377.8" width="1.2" height="13.3" fill="#2e8b57"/>
<rect x="1613.4" y="380.4" width="9" height="2.6" fill="#2e8b57"/>
<rect x="1630.1" y="377.4" width="1.2" height="27.5" fill="#ff0000"/>
<rect x="1626.2" y="380.4" width="9" height="7.6" fill="#ff0000"/>
<rect x="1643" y="387.4" width="1.2" height="23.1" fill="#ff0000"/>
<rect x="1639.1" y="387.8" width="9" height="16.7" fill="#ff0000"/>
<rect x="1655.8" y="402.9" width="1.2" height="25.1" fill="#ff0000"/>
<rect x="1651.9" y="404.1" width="9" height="5.4" fill="#ff0000"/>
<rect x="1668.6" y="386.4" width="1.2" height="23.1" fill="#2e8b57"/>
<rect x="1664.7" y="399.5" width="9" height="9.6" fill="#2e8b57"/>
<rect x="1681.4" y="387.4" width="1.2" height="18.5" fill="#2e8b57"/>
<rect x="1677.5" y="397.9" width="9" height="1.6" fill="#2e8b57"/>
<rect x="1694.2" y="366" width="1.2" height="32.5" fill="#2e8b57"/>
<rect x="1690.3" y="369.2" width="9" height="28.7" fill="#2e8b57"/>
<rect x="1707.1" y="351.1" width="1.2" height="25.3" fill="#2e8b57"/>
<rect x="1703.2" y="351.1" width="9" height="17.5" fill="#2e8b57"/>
<rect x="1719.9" y="329.2" width="1.2" height="25.1" fill="#2e8b57"/>
<rect x="1716" y="330.6" width="9" height="20.7" fill="#2e8b57"/>
<rect x="1732.7" y="319.8" width="1.2" height="21.5" fill="#ff0000"/>
<rect x="1728.8" y="330.6" width="9" height="1.8" fill="#ff0000"/>
<rect x="1745.5" y="321.8" width="1.2" height="12" fill="#2e8b57"/>
<rect x="1741.6" y="322.6" width="9" height="10.6" fill="#2e8b57"/>
<rect x="1758.3" y="321.8" width="1.2" height="20.5" fill="#ff0000"/>
<rect x="1754.4" y="322.4" width="9" height="15.9" fill="#ff0000"/>
<rect x="1771.2" y="289.1" width="1.2" height="69.8" fill="#2e8b57"/>
<rect x="1767.3" y="295.7" width="9" height="42.6" fill="#2e8b57"/>
<rect x="1784" y="295.1" width="1.2" height="34.7" fill="#ff0000"/>
<rect x="1780.1" y="295.5" width="9" height="9.2" fill="#ff0000"/>
<rect x="1796.8" y="298.7" width="1.2" height="30.9" fill="#ff0000"/>
<rect x="1792.9" y="304.5" width="9" height="5.3" fill="#ff0000"/>
<rect x="1809.6" y="308.1" width="1.2" height="65.7" fill="#ff0000"/>
<rect x="1805.7" y="309.3" width="9" height="56.1" fill="#ff0000"/>
<rect x="1822.4" y="341.3" width="1.2" height="37.5" fill="#ff0000"/>
<rect x="1818.5" y="363.6" width="9" height="1.2" fill="#ff0000"/>
<rect x="1835.3" y="357.3" width="1.2" height="50.8" fill="#ff0000"/>
<rect x="1831.4" y="365" width="9" height="28.9" fill="#ff0000"/>
<rect x="1848.1" y="378.8" width="1.2" height="28.3" fill="#2e8b57"/>
<rect x="1844.2" y="390.5" width="9" height="4" fill="#2e8b57"/>
<rect x="1860.9" y="370" width="1.2" height="43.5" fill="#2e8b57"/>
<rect x="1857" y="371.4" width="9" height="19.1" fill="#2e8b57"/>
</g>
<rect x="335.3" y="680" width="1.3" height="6" fill="#444"/>
</svg>
<div id="dlg">
<div class="title"><span>Renko chart line  MT5 - By TFLab 1.05</span></div>
<svg width="572" height="32" style="left:0;top:0"><path d="M451.5 15.5h10.4" stroke="#111" stroke-width="1.2"/><rect x="497" y="11" width="9" height="9" fill="none" stroke="#c8c8c8" stroke-width="1.1"/><path d="M543 10.3l10.2 10.2M553.2 10.3l-10.2 10.2" stroke="#111" stroke-width="1.3"/></svg>
<div class="tab" style="left:8px;width:52px">Common</div>
<div class="tab sel" style="left:60px;width:44.6px">Inputs</div>
<div class="tab" style="left:104.6px;width:64px">Parameters</div>
<div class="tab" style="left:168.4px;width:41.6px">Colors</div>
<div class="tab" style="left:210px;width:69px">Visualization</div>
<div class="page"></div>
<div class="list"></div>
<div class="lbl" style="left:23px;top:73px">Variable</div>
<div class="lbl" style="left:238.5px;top:73px">Value</div>
<div style="position:absolute;left:232.8px;top:70px;width:1px;height:39px;background:#e8e8e8"></div>
<div style="position:absolute;left:18px;top:109px;width:433px;height:1px;background:#e4e4e4"></div>
<div class="lbl" style="left:21.5px;top:92.5px;color:#3a84b0;font-size:10px;letter-spacing:.5px">01</div>
<div class="lbl" style="left:40px;top:92.6px">Box threshold (Points)</div>
<div class="lbl" style="left:237px;top:92.6px">50</div>
<div class="btn" style="left:458.4px;top:207.4px;width:97px;height:21px;line-height:20px"><span>Load</span></div>
<div class="btn" style="left:458.4px;top:238.4px;width:97px;height:21px;line-height:20px"><span>Save</span></div>
<div class="btn" style="left:344.2px;top:282.5px;width:68.8px;height:21px;line-height:17px;border:2px solid #0078d7"><span>OK</span></div>
<div class="btn" style="left:418.2px;top:282.5px;width:68.8px;height:21px;line-height:19px"><span>Cancel</span></div>
<div class="btn" style="left:493px;top:282.5px;width:68.8px;height:21px;line-height:19px"><span>Reset</span></div>
<svg width="12" height="12" style="left:559px;top:297.5px"><g fill="#c4c4c4"><rect x="8" y="1" width="2" height="2"/><rect x="5" y="4" width="2" height="2"/><rect x="8" y="4" width="2" height="2"/><rect x="2" y="7" width="2" height="2"/><rect x="5" y="7" width="2" height="2"/><rect x="8" y="7" width="2" height="2"/></g></svg>
</div>
<svg width="1919" height="110" viewBox="0 0 1919 110" style="z-index:5">
<defs><filter id="bl" x="-5%" y="-10%" width="110%" height="130%"><feGaussianBlur stdDeviation="1.2"/></filter></defs>
<path d="M1467 -2 L1500 72 Q1509 92 1531 92 L1741 92 Q1763 92 1772 72 L1804 -2 Z" fill="#f6f6f6" fill-opacity=".96" filter="url(#bl)"/>
<g fill="none" stroke="#1fe5ef" stroke-width="2.6" stroke-linejoin="miter">
<path d="M1542.6 38.2H1538.3V16.6H1546.9V34.2"/>
<path d="M1551.5 38.8H1568.4V29.2H1555.5L1538.3 47.1V56.4L1546.2 65H1568.1V55.4H1547.2V43.8"/>
</g>
<text x="1578.6" y="53.2" font-size="22.4" fill="#6a6a6a" stroke="#f5f5f5" stroke-width="0.55" letter-spacing="0.6" textLength="167.2" lengthAdjust="spacingAndGlyphs" opacity="0.99">TradingFinder</text>
</svg>
</body></html>
